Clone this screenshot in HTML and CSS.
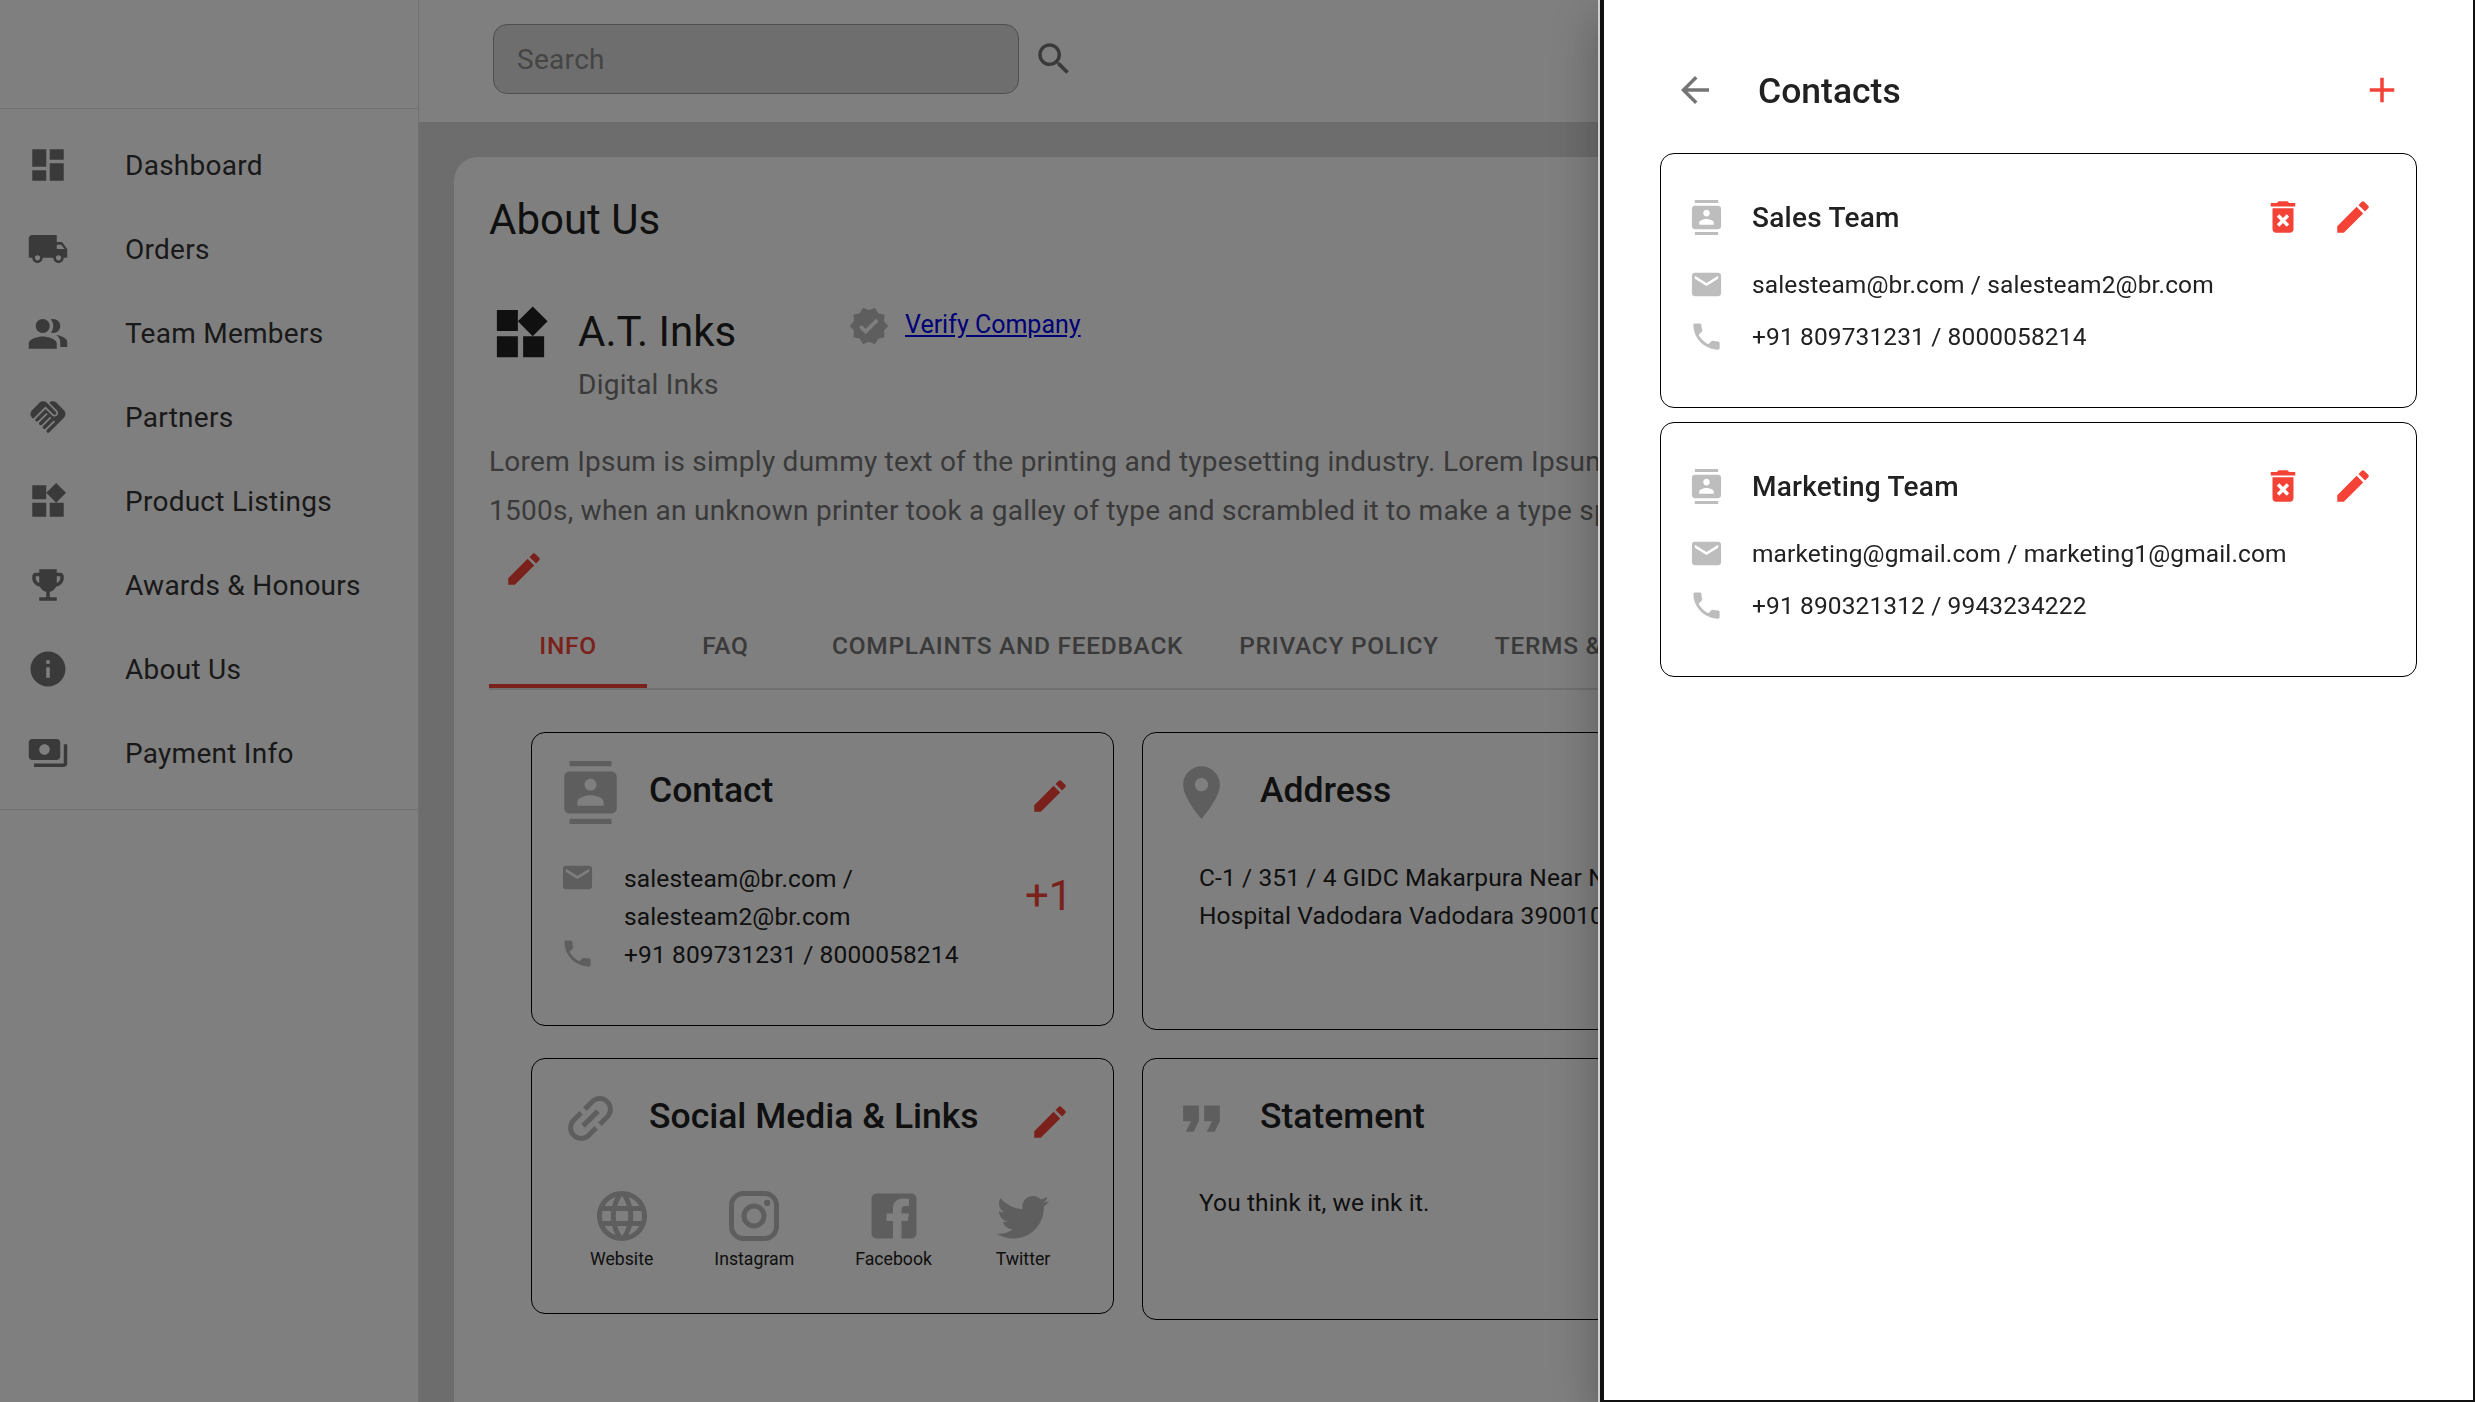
FILE: index.html
```html
<!DOCTYPE html>
<html lang="en">
<head>
  <meta charset="UTF-8">
  <meta name="viewport" content="width=device-width, initial-scale=1.0">
  <link rel="stylesheet" href="styles.css">
  <title>About Us</title>
</head>

<body>

<!-- icon sprite -->
<svg class="sprite" xmlns="http://www.w3.org/2000/svg">
  <symbol id="i-dashboard" viewBox="0 0 24 24"><path d="M3 13h8V3H3v10zm0 8h8v-6H3v6zm10 0h8V11h-8v10zm0-18v6h8V3h-8z"/></symbol>
  <symbol id="i-truck" viewBox="0 0 24 24"><path d="M20 8h-3V4H3c-1.1 0-2 .9-2 2v11h2c0 1.66 1.34 3 3 3s3-1.34 3-3h6c0 1.66 1.34 3 3 3s3-1.34 3-3h2v-5l-3-4zM6 18.5c-.83 0-1.5-.67-1.5-1.5s.67-1.5 1.5-1.5 1.5.67 1.5 1.5-.67 1.5-1.5 1.5zm13.5-9l1.96 2.5H17V9.5h2.5zm-1.5 9c-.83 0-1.5-.67-1.5-1.5s.67-1.5 1.5-1.5 1.5.67 1.5 1.5-.67 1.5-1.5 1.5z"/></symbol>
  <symbol id="i-people" viewBox="0 0 24 24"><path d="M16.67 13.13C18.04 14.06 19 15.32 19 17v3h4v-3c0-2.18-3.57-3.47-6.33-3.87zM15 12c2.21 0 4-1.79 4-4s-1.79-4-4-4c-.47 0-.91.1-1.33.24C14.5 5.27 15 6.58 15 8s-.5 2.73-1.33 3.76c.42.14.86.24 1.33.24zM9 12c2.21 0 4-1.79 4-4s-1.79-4-4-4-4 1.79-4 4 1.79 4 4 4zm0 2c-2.67 0-8 1.34-8 4v3h16v-3c0-2.66-5.33-4-8-4z"/></symbol>
  <symbol id="i-handshake" viewBox="0 0 24 24"><path d="M16.48 10.41c-.39.39-1.04.39-1.43 0l-4.47-4.46-7.05 7.04-.66-.63c-1.17-1.17-1.17-3.07 0-4.24l4.24-4.24c1.17-1.17 3.07-1.17 4.24 0L16.48 9c.39.39.39 1.02 0 1.41zm.7-2.12c.78.78.78 2.05 0 2.83-1.27 1.27-2.61.22-2.83 0l-3.76-3.76-5.57 5.57c-.39.39-.39 1.02 0 1.41.39.39 1.02.39 1.42 0l4.62-4.62.71.71-4.62 4.62c-.39.39-.39 1.02 0 1.41.39.39 1.02.39 1.42 0l4.62-4.62.71.71-4.62 4.62c-.39.39-.39 1.02 0 1.41.39.39 1.02.39 1.41 0l4.62-4.62.71.71-4.62 4.62c-.39.39-.39 1.02 0 1.41.39.39 1.02.39 1.41 0l8.32-8.34c1.17-1.17 1.17-3.07 0-4.24l-4.24-4.24c-1.15-1.15-3.01-1.17-4.18-.06l4.48 4.46z"/></symbol>
  <symbol id="i-widgets" viewBox="0 0 24 24"><path d="M13 13v8h8v-8h-8zM3 21h8v-8H3v8zM3 3v8h8V3H3zm13.66-1.31L11 7.34 16.66 13l5.66-5.66-5.66-5.65z"/></symbol>
  <symbol id="i-trophy" viewBox="0 0 24 24"><path d="M19 5h-2V3H7v2H5c-1.1 0-2 .9-2 2v1c0 2.55 1.92 4.63 4.39 4.94.63 1.5 1.98 2.63 3.61 2.96V19H7v2h10v-2h-4v-3.1c1.63-.33 2.98-1.46 3.61-2.96C19.08 12.63 21 10.55 21 8V7c0-1.1-.9-2-2-2zM5 8V7h2v3.82C5.84 10.4 5 9.3 5 8zm14 0c0 1.3-.84 2.4-2 2.82V7h2v1z"/></symbol>
  <symbol id="i-info" viewBox="0 0 24 24"><path d="M12 2C6.48 2 2 6.48 2 12s4.48 10 10 10 10-4.48 10-10S17.52 2 12 2zm1 15h-2v-6h2v6zm0-8h-2V7h2v2z"/></symbol>
  <symbol id="i-payments" viewBox="0 0 24 24"><path d="M19 14V6c0-1.1-.9-2-2-2H3c-1.1 0-2 .9-2 2v8c0 1.1.9 2 2 2h14c1.1 0 2-.9 2-2zm-9-1c-1.66 0-3-1.34-3-3s1.34-3 3-3 3 1.34 3 3-1.34 3-3 3zm13-6v11c0 1.1-.9 2-2 2H4v-2h17V7h2z"/></symbol>
  <symbol id="i-search" viewBox="0 0 24 24"><path d="M15.5 14h-.79l-.28-.27C15.41 12.59 16 11.11 16 9.5 16 5.91 13.09 3 9.5 3S3 5.91 3 9.5 5.91 16 9.5 16c1.61 0 3.09-.59 4.23-1.57l.27.28v.79l5 4.99L20.49 19l-4.99-5zm-6 0C7.01 14 5 11.99 5 9.5S7.01 5 9.5 5 14 7.01 14 9.5 11.99 14 9.5 14z"/></symbol>
  <symbol id="i-verified" viewBox="0 0 24 24"><path d="M23 12l-2.44-2.78.34-3.68-3.61-.82-1.89-3.18L12 3 8.6 1.54 6.71 4.72l-3.61.81.34 3.68L1 12l2.44 2.78-.34 3.69 3.61.82 1.89 3.18L12 21l3.4 1.46 1.89-3.18 3.61-.82-.34-3.68L23 12zm-12.91 4.72l-3.8-3.81 1.48-1.48 2.32 2.33 5.85-5.87 1.48 1.48-7.33 7.35z"/></symbol>
  <symbol id="i-edit" viewBox="0 0 24 24"><path d="M3 17.25V21h3.75L17.81 9.94l-3.75-3.75L3 17.25zM20.71 7.04c.39-.39.39-1.02 0-1.41l-2.34-2.34c-.39-.39-1.02-.39-1.41 0l-1.83 1.83 3.75 3.75 1.83-1.83z"/></symbol>
  <symbol id="i-contacts" viewBox="0 0 24 24"><path d="M20 0H4v2h16V0zM4 24h16v-2H4v2zM20 4H4c-1.1 0-2 .9-2 2v12c0 1.1.9 2 2 2h16c1.1 0 2-.9 2-2V6c0-1.1-.9-2-2-2zm-8 2.75c1.24 0 2.25 1.01 2.25 2.25s-1.01 2.25-2.25 2.25S9.75 10.24 9.75 9 10.76 6.75 12 6.75zM17 17H7v-1.5c0-1.67 3.33-2.5 5-2.5s5 .83 5 2.5V17z"/></symbol>
  <symbol id="i-email" viewBox="0 0 24 24"><path d="M20 4H4c-1.1 0-1.99.9-1.99 2L2 18c0 1.1.9 2 2 2h16c1.1 0 2-.9 2-2V6c0-1.1-.9-2-2-2zm0 4l-8 5-8-5V6l8 5 8-5v2z"/></symbol>
  <symbol id="i-phone" viewBox="0 0 24 24"><path d="M6.62 10.79c1.44 2.83 3.76 5.14 6.59 6.59l2.2-2.2c.27-.27.67-.36 1.02-.24 1.12.37 2.33.57 3.57.57.55 0 1 .45 1 1V20c0 .55-.45 1-1 1-9.39 0-17-7.61-17-17 0-.55.45-1 1-1h3.5c.55 0 1 .45 1 1 0 1.25.2 2.45.57 3.57.11.35.03.74-.25 1.02l-2.2 2.2z"/></symbol>
  <symbol id="i-delete" viewBox="0 0 24 24"><path d="M6 19c0 1.1.9 2 2 2h8c1.1 0 2-.9 2-2V7H6v12zm2.46-7.12l1.41-1.41L12 12.59l2.12-2.12 1.41 1.41L13.41 14l2.12 2.12-1.41 1.41L12 15.41l-2.12 2.12-1.41-1.41L10.59 14l-2.13-2.12zM15.5 4l-1-1h-5l-1 1H5v2h14V4z"/></symbol>
  <symbol id="i-add" viewBox="0 0 24 24"><path d="M19 13h-6v6h-2v-6H5v-2h6V5h2v6h6v2z"/></symbol>
  <symbol id="i-back" viewBox="0 0 24 24"><path d="M20 11H7.83l5.59-5.59L12 4l-8 8 8 8 1.41-1.41L7.83 13H20v-2z"/></symbol>
  <symbol id="i-pin" viewBox="0 0 24 24"><path d="M12 2C8.13 2 5 5.13 5 9c0 5.25 7 13 7 13s7-7.75 7-13c0-3.87-3.13-7-7-7zm0 9.5c-1.38 0-2.5-1.12-2.5-2.5s1.12-2.5 2.5-2.5 2.5 1.12 2.5 2.5-1.12 2.5-2.5 2.5z"/></symbol>
  <symbol id="i-quote" viewBox="0 0 24 24"><path d="M6 17h3l2-4V7H5v6h3zm8 0h3l2-4V7h-6v6h3z"/></symbol>
  <symbol id="i-link" viewBox="0 0 24 24"><path transform="rotate(-45 12 12)" d="M3.9 12c0-1.71 1.39-3.1 3.1-3.1h4V7H7c-2.76 0-5 2.24-5 5s2.24 5 5 5h4v-1.9H7c-1.71 0-3.1-1.39-3.1-3.1zM8 13h8v-2H8v2zm9-6h-4v1.9h4c1.71 0 3.1 1.39 3.1 3.1s-1.39 3.1-3.1 3.1h-4V17h4c2.76 0 5-2.24 5-5s-2.24-5-5-5z"/></symbol>
  <symbol id="i-globe" viewBox="0 0 24 24"><path d="M11.99 2C6.47 2 2 6.48 2 12s4.47 10 9.99 10C17.52 22 22 17.52 22 12S17.52 2 11.99 2zm6.93 6h-2.95c-.32-1.25-.78-2.45-1.38-3.56 1.84.63 3.37 1.91 4.33 3.56zM12 4.04c.83 1.2 1.48 2.53 1.91 3.96h-3.82c.43-1.43 1.08-2.76 1.91-3.96zM4.26 14C4.1 13.36 4 12.69 4 12s.1-1.36.26-2h3.38c-.08.66-.14 1.32-.14 2 0 .68.06 1.34.14 2H4.26zm.82 2h2.95c.32 1.25.78 2.45 1.38 3.56-1.84-.63-3.37-1.9-4.33-3.56zm2.95-8H5.08c.96-1.66 2.49-2.93 4.33-3.56C8.81 5.55 8.35 6.75 8.03 8zM12 19.96c-.83-1.2-1.48-2.53-1.91-3.96h3.82c-.43 1.43-1.08 2.76-1.91 3.96zM14.34 14H9.66c-.09-.66-.16-1.32-.16-2 0-.68.07-1.35.16-2h4.68c.09.65.16 1.32.16 2 0 .68-.07 1.34-.16 2zm.25 5.56c.6-1.11 1.06-2.31 1.38-3.56h2.95c-.96 1.65-2.49 2.93-4.33 3.56zM16.36 14c.08-.66.14-1.32.14-2 0-.68-.06-1.34-.14-2h3.38c.16.64.26 1.31.26 2s-.1 1.36-.26 2h-3.38z"/></symbol>
  <symbol id="i-instagram" viewBox="0 0 24 24"><path fill-rule="evenodd" d="M7.8 2h8.4A5.8 5.8 0 0 1 22 7.8v8.4a5.8 5.8 0 0 1-5.8 5.8H7.8A5.8 5.8 0 0 1 2 16.2V7.8A5.8 5.8 0 0 1 7.8 2zm-.2 2A3.6 3.6 0 0 0 4 7.6v8.8A3.6 3.6 0 0 0 7.6 20h8.8a3.6 3.6 0 0 0 3.6-3.6V7.6A3.6 3.6 0 0 0 16.4 4H7.6zm9.65 1.5a1.25 1.25 0 1 1 0 2.5 1.25 1.25 0 0 1 0-2.5zM12 7a5 5 0 1 1 0 10 5 5 0 0 1 0-10zm0 2a3 3 0 1 0 0 6 3 3 0 0 0 0-6z"/></symbol>
  <symbol id="i-facebook" viewBox="0 0 24 24"><path d="M5 3h14a2 2 0 0 1 2 2v14a2 2 0 0 1-2 2h-4v-7h2.5l.5-3h-3V9.5c0-.8.4-1.5 1.6-1.5H18V5.2c-.4 0-1.3-.2-2.4-.2-2.4 0-4 1.5-4 4.2V11H9v3h2.6v7H5a2 2 0 0 1-2-2V5a2 2 0 0 1 2-2z"/></symbol>
  <symbol id="i-twitter" viewBox="0 0 24 24"><path d="M22.46 6c-.77.35-1.6.58-2.46.69.88-.53 1.56-1.37 1.88-2.38-.83.5-1.75.85-2.72 1.05C18.37 4.5 17.26 4 16 4c-2.35 0-4.27 1.92-4.27 4.29 0 .34.04.67.11.98C8.28 9.09 5.11 7.38 3 4.79c-.37.63-.58 1.37-.58 2.15 0 1.49.75 2.81 1.91 3.56-.71 0-1.37-.2-1.95-.5v.03c0 2.08 1.48 3.82 3.44 4.21a4.22 4.22 0 0 1-1.93.07 4.28 4.28 0 0 0 4 2.98 8.521 8.521 0 0 1-5.33 1.84c-.34 0-.68-.02-1.02-.06C3.44 20.29 5.7 21 8.12 21 16 21 20.33 14.46 20.33 8.79c0-.19 0-.37-.01-.56.84-.6 1.56-1.36 2.14-2.23z"/></symbol>
</svg>

<div class="app">
  <aside class="sidebar">
    <nav class="side-nav">
      <a class="side-item"><svg class="icon"><use href="#i-dashboard"/></svg><span>Dashboard</span></a>
      <a class="side-item"><svg class="icon"><use href="#i-truck"/></svg><span>Orders</span></a>
      <a class="side-item"><svg class="icon"><use href="#i-people"/></svg><span>Team Members</span></a>
      <a class="side-item"><svg class="icon"><use href="#i-handshake"/></svg><span>Partners</span></a>
      <a class="side-item"><svg class="icon"><use href="#i-widgets"/></svg><span>Product Listings</span></a>
      <a class="side-item"><svg class="icon"><use href="#i-trophy"/></svg><span>Awards &amp; Honours</span></a>
      <a class="side-item"><svg class="icon"><use href="#i-info"/></svg><span>About Us</span></a>
      <a class="side-item"><svg class="icon"><use href="#i-payments"/></svg><span>Payment Info</span></a>
    </nav>
  </aside>

  <div class="main">
    <header class="topbar">
      <input class="search-input" type="text" placeholder="Search">
      <svg class="icon"><use href="#i-search"/></svg>
    </header>

    <div class="content">
      <section class="panel">
        <h1 class="panel-title">About Us</h1>

        <div class="company">
          <svg class="company-logo"><use href="#i-widgets"/></svg>
          <div class="company-names">
            <div class="company-name">A.T. Inks</div>
            <div class="company-type">Digital Inks</div>
          </div>
          <div class="verify">
            <svg class="icon verify-icon"><use href="#i-verified"/></svg>
            <a class="verify-link" href="#">Verify Company</a>
          </div>
        </div>

        <p class="about-text">Lorem Ipsum is simply dummy text of the printing and typesetting industry. Lorem Ipsum has been<br>1500s, when an unknown printer took a galley of type and scrambled it to make a type specimen</p>
        <svg class="icon red about-edit"><use href="#i-edit"/></svg>

        <div class="tabs">
          <div class="tab active">Info</div>
          <div class="tab">FAQ</div>
          <div class="tab">Complaints and Feedback</div>
          <div class="tab">Privacy Policy</div>
          <div class="tab">Terms &amp; Conditions</div>
        </div>

        <div class="info-grid">
          <div class="info-card contact-card">
            <div class="info-head">
              <svg class="head-icon"><use href="#i-contacts"/></svg>
              <h3 class="info-title">Contact</h3>
              <svg class="icon red head-edit"><use href="#i-edit"/></svg>
            </div>
            <div class="contact-body">
              <div class="contact-lines">
                <div class="contact-line"><svg class="small-icon"><use href="#i-email"/></svg><span>salesteam@br.com /<br>salesteam2@br.com</span></div>
                <div class="contact-line"><svg class="small-icon"><use href="#i-phone"/></svg><span>+91 809731231 / 8000058214</span></div>
              </div>
              <div class="more-count">+1</div>
            </div>
          </div>

          <div class="info-card address-card">
            <div class="info-head">
              <svg class="head-icon"><use href="#i-pin"/></svg>
              <h3 class="info-title">Address</h3>
            </div>
            <p class="info-text">C-1 / 351 / 4 GIDC Makarpura Near Nirmal<br>Hospital Vadodara Vadodara 390010</p>
          </div>

          <div class="info-card social-card">
            <div class="info-head">
              <svg class="head-icon"><use href="#i-link"/></svg>
              <h3 class="info-title">Social Media &amp; Links</h3>
              <svg class="icon red head-edit"><use href="#i-edit"/></svg>
            </div>
            <div class="social-row">
              <div class="social-item"><svg class="social-icon"><use href="#i-globe"/></svg><span>Website</span></div>
              <div class="social-item"><svg class="social-icon"><use href="#i-instagram"/></svg><span>Instagram</span></div>
              <div class="social-item"><svg class="social-icon"><use href="#i-facebook"/></svg><span>Facebook</span></div>
              <div class="social-item"><svg class="social-icon"><use href="#i-twitter"/></svg><span>Twitter</span></div>
            </div>
          </div>

          <div class="info-card statement-card">
            <div class="info-head">
              <svg class="head-icon"><use href="#i-quote"/></svg>
              <h3 class="info-title">Statement</h3>
            </div>
            <p class="info-text">You think it, we ink it.</p>
          </div>
        </div>
      </section>
    </div>
  </div>
</div>

<!-- dim layer and contacts drawer -->
<div class="overlay"></div>

<aside class="drawer">
  <div class="drawer-head">
    <svg class="icon"><use href="#i-back"/></svg>
    <h2 class="drawer-title">Contacts</h2>
    <svg class="icon red"><use href="#i-add"/></svg>
  </div>

  <div class="contact-box">
    <div class="box-head">
      <svg class="box-icon"><use href="#i-contacts"/></svg>
      <h3 class="box-title">Sales Team</h3>
      <svg class="icon red"><use href="#i-delete"/></svg>
      <svg class="icon red"><use href="#i-edit"/></svg>
    </div>
    <div class="box-row"><svg class="box-icon"><use href="#i-email"/></svg><span>salesteam@br.com / salesteam2@br.com</span></div>
    <div class="box-row"><svg class="box-icon"><use href="#i-phone"/></svg><span>+91 809731231 / 8000058214</span></div>
  </div>

  <div class="contact-box">
    <div class="box-head">
      <svg class="box-icon"><use href="#i-contacts"/></svg>
      <h3 class="box-title">Marketing Team</h3>
      <svg class="icon red"><use href="#i-delete"/></svg>
      <svg class="icon red"><use href="#i-edit"/></svg>
    </div>
    <div class="box-row"><svg class="box-icon"><use href="#i-email"/></svg><span>marketing@gmail.com / marketing1@gmail.com</span></div>
    <div class="box-row"><svg class="box-icon"><use href="#i-phone"/></svg><span>+91 890321312 / 9943234222</span></div>
  </div>
</aside>

</body>
</html>
```

FILE: styles.css
```css
* {
  box-sizing: border-box;
}

html, body {
  margin: 0;
  height: 100%;
  overflow: hidden;
}

body {
  font-family: Roboto, "Liberation Sans", sans-serif;
  color: #212121;
  background: #fff;
}

.sprite {
  display: none;
}

.icon {
  width: 42px;
  height: 42px;
  flex: none;
  fill: #757575;
}

.icon.red {
  fill: #f44336;
}

.app {
  display: flex;
  height: 1402px;
}

/* sidebar */
.sidebar {
  width: 419px;
  flex: none;
  background: #fff;
  border-right: 1px solid #e0e0e0;
  padding-top: 108px;
}

.side-nav {
  border-top: 1px solid #e0e0e0;
  border-bottom: 1px solid #e0e0e0;
  padding: 14px 0;
}

.side-item {
  display: flex;
  align-items: center;
  height: 84px;
  padding-left: 27px;
  font-size: 28px;
  letter-spacing: 0.26px;
  color: #333;
}

.side-item .icon {
  margin-right: 56px;
}

/* top bar */
.main {
  flex: 1;
  min-width: 0;
  background: #dadada;
}

.topbar {
  display: flex;
  align-items: center;
  gap: 14px;
  height: 122px;
  padding: 0 0 4px 74px;
  background: #fff;
}

.search-input {
  width: 526px;
  height: 70px;
  padding: 0 23px;
  background: #dcdcdc;
  border: 1px solid #9e9e9e;
  border-radius: 14px;
  font: 28px Roboto, sans-serif;
  letter-spacing: 0.3px;
  outline: none;
}

.search-input::placeholder {
  color: #8a8a8a;
}

/* about panel */
.content {
  padding: 35px 36px 0 35px;
}

.panel {
  height: 1300px;
  padding: 35px 35px 0;
  background: #fff;
  border-radius: 24px 24px 0 0;
}

.panel-title {
  margin: 0;
  font-size: 42px;
  font-weight: 400;
  line-height: 56px;
  color: #212121;
}

.company {
  display: flex;
  align-items: flex-start;
  margin-top: 28px;
}

.company-logo {
  width: 63px;
  height: 63px;
  flex: none;
  fill: #212121;
  margin-top: 26px;
}

.company-names {
  width: 270px;
  margin-left: 26px;
}

.company-name {
  font-size: 42px;
  line-height: 56px;
  margin-top: 28px;
}

.company-type {
  font-size: 28px;
  letter-spacing: 0.25px;
  line-height: 42px;
  margin-top: 4px;
  color: #757575;
}

.verify {
  display: flex;
  align-items: center;
  gap: 15px;
  margin-top: 29px;
}

.verify-icon {
  fill: #bdbdbd;
}

.verify-link {
  font-size: 25px;
  color: #00e;
  text-decoration: underline;
  margin-top: -4px;
}

.about-text {
  margin: 31px 0 0;
  font-size: 28px;
  line-height: 49px;
  letter-spacing: 0.25px;
  color: #757575;
  white-space: nowrap;
}

.about-edit {
  display: block;
  margin: 13px 0 0 14px;
}

.tabs {
  display: flex;
  margin-top: 13px;
  border-bottom: 2px solid #e0e0e0;
  white-space: nowrap;
}

.tab {
  min-width: 157px;
  padding: 0 28px;
  height: 85px;
  line-height: 85px;
  text-align: center;
  font-size: 24.5px;
  font-weight: 500;
  letter-spacing: 0.7px;
  text-transform: uppercase;
  color: #757575;
}

.tab.active {
  min-width: 158px;
  color: #f44336;
  box-shadow: inset 0 -4px 0 #f44336;
  margin-bottom: -2px;
}

/* info cards */
.info-grid {
  display: grid;
  grid-template-columns: 583px 1100px;
  column-gap: 28px;
  row-gap: 28px;
  align-items: start;
  margin: 42px 0 0 42px;
}

.info-card {
  border: 1px solid #000;
  border-radius: 14px;
  padding: 28px 27px 0;
}

.contact-card {
  height: 294px;
}

.address-card {
  height: 298px;
}

.social-card {
  height: 256px;
}

.statement-card {
  height: 262px;
}

.info-head {
  display: flex;
  align-items: flex-start;
  height: 63px;
}

.head-icon {
  width: 63px;
  height: 63px;
  flex: none;
  fill: #bdbdbd;
}

.info-title {
  margin: 1px 0 0 27px;
  font-size: 35.5px;
  line-height: 56px;
  font-weight: 500;
  color: #212121;
  white-space: nowrap;
}

.head-edit {
  margin: 14px 15px 0 auto;
}

.contact-body {
  display: flex;
  align-items: flex-start;
  margin-top: 36px;
}

.contact-lines {
  width: 465px;
  margin-left: 1px;
}

.contact-line {
  display: flex;
  font-size: 24.5px;
  letter-spacing: 0.12px;
  line-height: 38px;
}

.small-icon {
  width: 35px;
  height: 35px;
  flex: none;
  fill: #bdbdbd;
  margin-right: 29px;
}

.more-count {
  font-size: 42px;
  line-height: 49px;
  margin-top: 11px;
  color: #f44336;
}

.info-text {
  margin: 35px 0 0 29px;
  font-size: 24.5px;
  letter-spacing: 0.12px;
  line-height: 38px;
  white-space: nowrap;
}

.statement-card .info-text {
  margin-top: 34px;
}

.social-row {
  display: flex;
  gap: 61px;
  margin: 36px 0 0 31px;
}

.social-item {
  display: flex;
  flex-direction: column;
  align-items: center;
  font-size: 17.7px;
  line-height: 26px;
}

.social-icon {
  width: 60px;
  height: 60px;
  fill: #bdbdbd;
}

/* dim layer */
.overlay {
  position: fixed;
  inset: 0;
  background: rgba(0, 0, 0, 0.5);
}

/* contacts drawer */
.drawer {
  position: fixed;
  top: 0;
  right: 0;
  bottom: 0;
  width: 875px;
  background: #fff;
  border: solid #111;
  border-width: 0 2px 2px 4px;
  padding: 0 56px;
  box-shadow: -2px 0 0 #cfcfcf, 0 14px 18px -9px rgba(0, 0, 0, 0.2), 0 28px 42px 4px rgba(0, 0, 0, 0.14), 0 10px 52px 9px rgba(0, 0, 0, 0.12);
}

.drawer-head {
  display: flex;
  align-items: flex-start;
  height: 153px;
  padding: 26px 0 0 14px;
}

.drawer-head .icon {
  margin-top: 43px;
}

.drawer-title {
  flex: 1;
  margin: 41px 0 0 42px;
  font-size: 35.5px;
  line-height: 48px;
  font-weight: 500;
}

.drawer-head .icon.red {
  margin-right: 14px;
}

.contact-box {
  width: 757px;
  height: 255px;
  margin: 0 0 14px;
  padding: 36px 42px 0 28px;
  border: 1px solid #000;
  border-radius: 14px;
}

.box-head {
  display: flex;
  align-items: center;
  gap: 28px;
  height: 54px;
  margin-bottom: 14px;
}

.box-title {
  flex: 1;
  margin: 0;
  font-size: 28px;
  font-weight: 500;
  letter-spacing: 0.25px;
}

.box-row {
  display: flex;
  align-items: center;
  height: 52px;
  gap: 28px;
  font-size: 24.5px;
  letter-spacing: 0.12px;
}

.box-icon {
  width: 35px;
  height: 35px;
  flex: none;
  fill: #bdbdbd;
}
```
